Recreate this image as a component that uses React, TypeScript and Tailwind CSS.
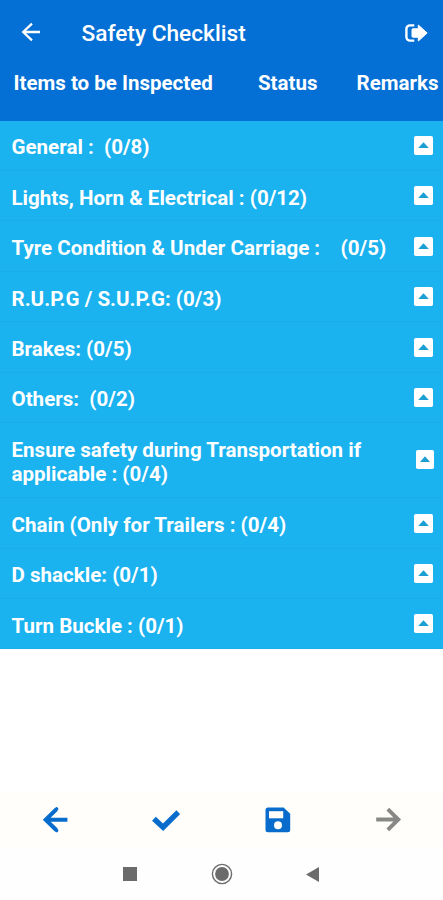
import type { ReactNode } from "react";
import clsx from "clsx";

type Section = {
  label: string;
  wrap?: boolean;
};

const sections: Section[] = [
  { label: "General :  (0/8)" },
  { label: "Lights, Horn & Electrical : (0/12)" },
  { label: "Tyre Condition & Under Carriage :    (0/5)" },
  { label: "R.U.P.G / S.U.P.G: (0/3)" },
  { label: "Brakes: (0/5)" },
  { label: "Others:  (0/2)" },
  {
    label: "Ensure safety during Transportation if\napplicable : (0/4)",
    wrap: true,
  },
  { label: "Chain (Only for Trailers : (0/4)" },
  { label: "D shackle: (0/1)" },
  { label: "Turn Buckle : (0/1)" },
];

export default function App() {
  return (
    <div className="flex h-[900px] w-[443px] flex-col overflow-hidden bg-white font-['Roboto',sans-serif]">
      <Header />
      <main className="flex-1">
        {sections.map((s) => (
          <SectionRow key={s.label} section={s} />
        ))}
      </main>
      <ActionBar />
      <SystemNav />
    </div>
  );
}

function Header() {
  return (
    <header className="h-[120.6px] shrink-0 bg-[#0470d5] text-white">
      <div className="flex h-[66px] items-center pr-[15px] pl-[21px]">
        <svg width="20" height="20" viewBox="0 0 20 20" className="-mt-[2px]">
          <path
            d="M19 10H2.5M11 1.6L2.2 10l8.8 8.4"
            fill="none"
            stroke="currentColor"
            strokeWidth="2.3"
          />
        </svg>
        <h1 className="ml-[40.5px] pt-[2px] text-[22.7px] font-medium whitespace-nowrap">
          Safety Checklist
        </h1>
        <svg
          width="23"
          height="18"
          viewBox="0 0 23 18"
          className="-mt-[1px] ml-auto"
        >
          <path
            d="M9.3 1.4H5A3.6 3.6 0 0 0 1.4 5v8A3.6 3.6 0 0 0 5 16.6h4.3"
            fill="none"
            stroke="currentColor"
            strokeWidth="2.4"
          />
          <path
            d="M13.3 1v3.8H7.8a.8.8 0 0 0-.8.8v6.8a.8.8 0 0 0 .8.8h5.5V17l8.9-8z"
            fill="currentColor"
            stroke="currentColor"
            strokeLinejoin="round"
          />
        </svg>
      </div>
      <div className="flex pl-[13.5px] text-[20.5px] leading-[34px] font-bold whitespace-nowrap">
        <span className="w-[244.5px]">Items to be Inspected</span>
        <span className="w-[98.5px]">Status</span>
        <span>Remarks</span>
      </div>
    </header>
  );
}

function SectionRow({ section }: { section: Section }) {
  return (
    <div
      className={clsx(
        "flex justify-between border-b border-[#19adea] bg-[#1ab2ef] pl-[11.5px] text-white",
        section.wrap ? "h-[75.2px] pr-[9px]" : "h-[50.4px] pr-[10px]",
      )}
    >
      <span className="pt-[14.8px] text-[20.55px] leading-[24px] font-bold whitespace-pre">
        {section.label}
      </span>
      <svg
        width={section.wrap ? 18 : 19}
        height="19"
        viewBox="0 0 19 19"
        preserveAspectRatio="none"
        className={clsx("shrink-0", section.wrap ? "mt-[27px]" : "mt-[15.5px]")}
      >
        <rect width="19" height="19" rx="1.8" fill="#fff" />
        <path d="M4.2 12L9.5 6.2l5.3 5.8z" fill="#1b9fd3" />
      </svg>
    </div>
  );
}

function ActionBar() {
  return (
    <div className="grid h-[56px] shrink-0 grid-cols-4 bg-[#fffefa] text-[#076ccb]">
      <Action>
        <path
          d="M26.4 13.7H5M15 3.6L4.7 13.7 15 23.8"
          fill="none"
          stroke="currentColor"
          strokeWidth="4.1"
        />
        <path
          d="M15 3.6l.6-.6M15 23.8l.6.6"
          stroke="currentColor"
          strokeWidth="3.6"
          strokeLinecap="round"
        />
      </Action>
      <Action>
        <path
          d="M1.9 12.7l9.2 8.5L26.3 6.2"
          fill="none"
          stroke="currentColor"
          strokeWidth="5.4"
        />
      </Action>
      <Action>
        <path
          d="M5 1.5h15.6l6.6 6.2v16a2.5 2.5 0 0 1-2.5 2.5H5a2.5 2.5 0 0 1-2.5-2.5V4A2.5 2.5 0 0 1 5 1.5z"
          fill="currentColor"
        />
        <path d="M6 5.2h14.2v7.1H6z" fill="#fffefa" />
        <circle cx="15" cy="19.3" r="4" fill="#fffefa" />
      </Action>
      <Action className="text-[#888886]">
        <path
          d="M2.2 13.5h22M13.8 3.2l10.5 10.3-10.5 10.3"
          fill="none"
          stroke="currentColor"
          strokeWidth="3.9"
        />
      </Action>
    </div>
  );
}

function Action({
  children,
  className = "",
}: {
  children: ReactNode;
  className?: string;
}) {
  return (
    <button className={`flex items-center justify-center ${className}`}>
      <svg width="28" height="28" viewBox="0 0 28 28">
        {children}
      </svg>
    </button>
  );
}

function SystemNav() {
  return (
    <nav className="flex h-[52px] shrink-0 items-center bg-[#fefefe] pl-[123px] text-[#6b6b6b]">
      <span className="h-[14px] w-[14px] bg-current" />
      <svg width="22" height="22" viewBox="0 0 22 22" className="ml-[74px]">
        <circle
          cx="11"
          cy="11"
          r="9.6"
          fill="none"
          stroke="currentColor"
          strokeWidth="1.4"
        />
        <circle cx="11" cy="11" r="6.9" fill="currentColor" />
      </svg>
      <svg width="14" height="15" viewBox="0 0 14 15" className="ml-[73px]">
        <path d="M0 7.5L13 0v15z" fill="currentColor" />
      </svg>
    </nav>
  );
}
